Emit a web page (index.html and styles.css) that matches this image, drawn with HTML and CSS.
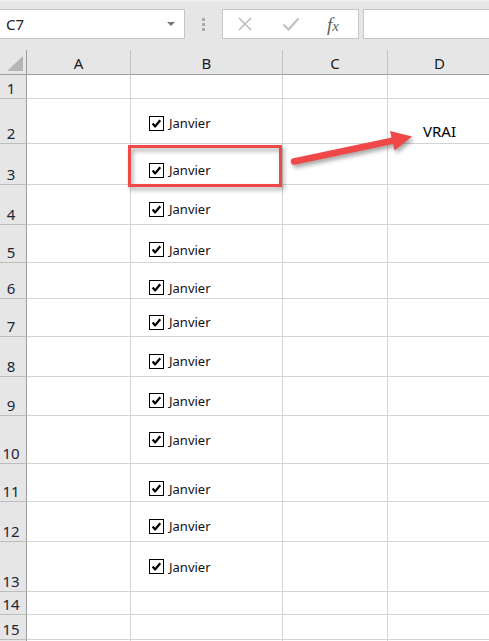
FILE: index.html
```html
<!DOCTYPE html>
<html lang="fr">

<head>
    <meta charset="UTF-8">
    <meta name="viewport" content="width=device-width, initial-scale=1.0">
    <title>Classeur</title>
    <link rel="stylesheet" href="styles.css">
</head>

<body>
    <svg class="defs" width="0" height="0">
        <symbol id="checkbox" viewBox="0 0 15 15">
            <rect x="0.5" y="0.5" width="14" height="14" fill="#fff" stroke="#000"/>
            <path d="M3.6 7.4 L6.2 10.4 L11.2 4.2" fill="none" stroke="#000" stroke-width="2.3" stroke-linejoin="round"/>
        </symbol>
    </svg>

    <div class="toolbar">
        <div class="namebox">
            <span>C7</span>
            <span class="caret"></span>
        </div>
        <div class="grip">
            <span></span><span></span><span></span>
        </div>
        <div class="fbuttons">
            <svg class="ficon" width="16" height="16" viewBox="0 0 16 16">
                <path d="M2 2 L14 14 M14 2 L2 14" stroke="#bdbdbd" stroke-width="1.6" fill="none"/>
            </svg>
            <svg class="ficon" width="18" height="16" viewBox="0 0 18 16">
                <path d="M1.5 8.5 L6.5 13.5 L16.5 2.5" stroke="#c4c4c4" stroke-width="2.4" fill="none"/>
            </svg>
            <span class="fx"><i>f</i><i class="x">x</i></span>
        </div>
        <div class="formula"></div>
    </div>

    <div class="sheet">
        <div class="row head">
            <div class="corner"><span class="tri"></span></div>
            <div class="colhead">A</div>
            <div class="colhead">B</div>
            <div class="colhead">C</div>
            <div class="colhead">D</div>
        </div>

        <div class="row" style="height: 24px">
            <div class="rh">1</div>
            <div class="cell"></div><div class="cell"></div><div class="cell"></div><div class="cell"></div>
        </div>
        <div class="row" style="height: 45px">
            <div class="rh">2</div>
            <div class="cell"></div>
            <div class="cell box off-a"><svg class="cb"><use href="#checkbox"/></svg>Janvier</div>
            <div class="cell"></div>
            <div class="cell value">VRAI</div>
        </div>
        <div class="row" style="height: 41px">
            <div class="rh">3</div>
            <div class="cell"></div>
            <div class="cell box off-c"><svg class="cb"><use href="#checkbox"/></svg>Janvier</div>
            <div class="cell"></div><div class="cell"></div>
        </div>
        <div class="row" style="height: 40px">
            <div class="rh">4</div>
            <div class="cell"></div>
            <div class="cell box off-b"><svg class="cb"><use href="#checkbox"/></svg>Janvier</div>
            <div class="cell"></div><div class="cell"></div>
        </div>
        <div class="row" style="height: 38px">
            <div class="rh">5</div>
            <div class="cell"></div>
            <div class="cell box off-c"><svg class="cb"><use href="#checkbox"/></svg>Janvier</div>
            <div class="cell"></div><div class="cell"></div>
        </div>
        <div class="row" style="height: 36px">
            <div class="rh">6</div>
            <div class="cell"></div>
            <div class="cell box off-d"><svg class="cb"><use href="#checkbox"/></svg>Janvier</div>
            <div class="cell"></div><div class="cell"></div>
        </div>
        <div class="row" style="height: 38px">
            <div class="rh">7</div>
            <div class="cell"></div>
            <div class="cell box off-b"><svg class="cb"><use href="#checkbox"/></svg>Janvier</div>
            <div class="cell"></div><div class="cell"></div>
        </div>
        <div class="row" style="height: 40px">
            <div class="rh">8</div>
            <div class="cell"></div>
            <div class="cell box off-b"><svg class="cb"><use href="#checkbox"/></svg>Janvier</div>
            <div class="cell"></div><div class="cell"></div>
        </div>
        <div class="row" style="height: 39px">
            <div class="rh">9</div>
            <div class="cell"></div>
            <div class="cell box off-b"><svg class="cb"><use href="#checkbox"/></svg>Janvier</div>
            <div class="cell"></div><div class="cell"></div>
        </div>
        <div class="row" style="height: 48px">
            <div class="rh">10</div>
            <div class="cell"></div>
            <div class="cell box"><svg class="cb"><use href="#checkbox"/></svg>Janvier</div>
            <div class="cell"></div><div class="cell"></div>
        </div>
        <div class="row" style="height: 38px">
            <div class="rh">11</div>
            <div class="cell"></div>
            <div class="cell box off-c"><svg class="cb"><use href="#checkbox"/></svg>Janvier</div>
            <div class="cell"></div><div class="cell"></div>
        </div>
        <div class="row" style="height: 40px">
            <div class="rh">12</div>
            <div class="cell"></div>
            <div class="cell box off-b"><svg class="cb"><use href="#checkbox"/></svg>Janvier</div>
            <div class="cell"></div><div class="cell"></div>
        </div>
        <div class="row" style="height: 50px">
            <div class="rh">13</div>
            <div class="cell"></div>
            <div class="cell box"><svg class="cb"><use href="#checkbox"/></svg>Janvier</div>
            <div class="cell"></div><div class="cell"></div>
        </div>
        <div class="row" style="height: 23px">
            <div class="rh">14</div>
            <div class="cell"></div><div class="cell"></div><div class="cell"></div><div class="cell"></div>
        </div>
        <div class="row" style="height: 25px">
            <div class="rh">15</div>
            <div class="cell"></div><div class="cell"></div><div class="cell"></div><div class="cell"></div>
        </div>
        <div class="row" style="height: 24px">
            <div class="rh"></div>
            <div class="cell"></div><div class="cell"></div><div class="cell"></div><div class="cell"></div>
        </div>
    </div>

    <!-- annotation drawn over the sheet -->
    <svg class="markup" width="489" height="641" viewBox="0 0 489 641">
        <g class="shadow">
            <rect x="129.5" y="146.5" width="151" height="39" fill="none" stroke="#f04848" stroke-width="3"/>
            <line x1="294" y1="161.5" x2="396" y2="140" stroke="#f04848" stroke-width="6.5" stroke-linecap="round"/>
            <polygon points="412,136.5 390,131 394.6,150.5" fill="#f04848"/>
        </g>
    </svg>
</body>

</html>
```

FILE: styles.css
```css
body {
    margin: 0;
    position: relative;
    width: 489px;
    height: 641px;
    overflow: hidden;
    background-color: #fff;
    font-family: "Noto Sans", "Open Sans", sans-serif;
    color: #1f1f1f;
}

.defs {
    position: absolute;
}

.toolbar {
    height: 50px;
    box-sizing: border-box;
    padding-top: 9px;
    background-color: #e6e6e6;
    border-top: 2px solid #eeeeee;
    display: flex;
    align-items: flex-start;
}

.toolbar > div {
    margin-top: -2px;
}

.namebox {
    width: 185px;
    height: 30px;
    box-sizing: border-box;
    background-color: #fff;
    border: 1px solid #c6c6c6;
    border-left: none;
    display: flex;
    align-items: center;
    justify-content: space-between;
    padding: 0 9px 0 6px;
    font-size: 15px;
    color: #222;
}

.caret {
    width: 0;
    height: 0;
    border-left: 4px solid transparent;
    border-right: 4px solid transparent;
    border-top: 4px solid #777;
}

.grip {
    width: 37px;
    height: 30px;
    display: flex;
    flex-direction: column;
    align-items: center;
    justify-content: center;
    gap: 2px;
}

.grip span {
    width: 3px;
    height: 3px;
    background-color: #a8a8a8;
}

.fbuttons {
    width: 137px;
    height: 30px;
    box-sizing: border-box;
    background-color: #fff;
    border: 1px solid #c6c6c6;
    display: flex;
    align-items: center;
    padding-left: 14px;
    gap: 29px;
}

.fx {
    font-family: "Liberation Serif", serif;
    color: #606060;
    font-size: 19px;
    line-height: 1;
    margin-left: -2px;
}

.fx .x {
    font-size: 15px;
}

.formula {
    flex: 1;
    margin-left: 4px;
    height: 30px;
    box-sizing: border-box;
    background-color: #fff;
    border: 1px solid #c6c6c6;
    border-right: none;
}

.row {
    display: grid;
    grid-template-columns: 27px 104px 152px 105px 104px;
    box-sizing: border-box;
}

.row > div {
    box-sizing: border-box;
}

.head {
    height: 25px;
    background-color: #e6e6e6;
}

.corner {
    border-right: 1px solid #9e9e9e;
    border-bottom: 1px solid #9e9e9e;
    position: relative;
}

.tri {
    position: absolute;
    right: 3px;
    bottom: 3px;
    width: 0;
    height: 0;
    border-left: 16px solid transparent;
    border-bottom: 15px solid #b5b5b5;
}

.colhead {
    border-right: 1px solid #c2c2c2;
    border-bottom: 1px solid #9e9e9e;
    display: flex;
    align-items: flex-end;
    justify-content: center;
    padding-bottom: 1px;
    font-size: 15px;
    color: #1a1a1a;
}

.rh {
    background-color: #e6e6e6;
    border-right: 1px solid #9e9e9e;
    border-bottom: 1px solid #bdbdbd;
    display: flex;
    align-items: flex-end;
    justify-content: center;
    padding-right: 4px;
    font-size: 15px;
    line-height: 20px;
    color: #1c2536;
}

.cell {
    border-right: 1px solid #d4d4d4;
    border-bottom: 1px solid #d4d4d4;
}

.box {
    display: flex;
    align-items: center;
    padding-left: 18px;
    gap: 5px;
    font-size: 13px;
    color: #111;
}

.off-a {
    padding-top: 4px;
}

.off-b {
    padding-top: 9px;
}

.off-c {
    padding-top: 12px;
}

.off-d {
    padding-top: 14px;
}

.cb {
    width: 15px;
    height: 15px;
    flex: none;
}

.value {
    display: flex;
    align-items: flex-end;
    justify-content: center;
    padding-bottom: 2px;
    font-size: 15px;
    color: #000;
}

.markup {
    position: absolute;
    top: 0;
    left: 0;
    pointer-events: none;
}

.shadow {
    filter: drop-shadow(2px 3px 2px rgba(0, 0, 0, 0.35));
}
```
